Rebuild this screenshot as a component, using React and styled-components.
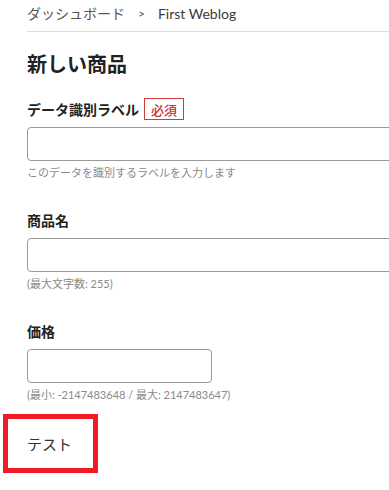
import React from "react";
import styled, { createGlobalStyle } from "styled-components";

const GlobalStyle = createGlobalStyle`
  body {
    margin: 0;
    background: #fff;
    font-family: "Lato", "Noto Sans CJK JP", sans-serif;
    color: #222;
  }
`;

const Page = styled.div`
  width: 389px;
  height: 490px;
  overflow: hidden;
`;

const Content = styled.div`
  padding-left: 27px;
`;

const Breadcrumb = styled.nav`
  display: flex;
  align-items: center;
  gap: 13px;
  padding: 4px 0 7px;
  font-size: 14px;
  line-height: 20px;
  color: #444;
  border-bottom: 1px solid #ddd;
`;

const Crumb = styled.span`
  color: ${({ current }) => (current ? "#3a3a3a" : "#555")};
`;

const Separator = styled.span`
  font-size: 12px;
  color: #555;
`;

const Heading = styled.h1`
  margin: 18px 0 0;
  font-size: 20px;
  line-height: 28px;
  font-weight: 700;
  color: #222;
`;

const Field = styled.div`
  margin-top: ${({ first }) => (first ? "20px" : "28px")};
`;

const LabelRow = styled.div`
  display: flex;
  align-items: center;
  gap: 5px;
  height: 22px;
`;

const Label = styled.label`
  font-size: 14px;
  font-weight: 700;
  color: #222;
`;

const Required = styled.span`
  display: inline-flex;
  align-items: center;
  justify-content: center;
  height: 20px;
  padding: 0 6px;
  border: 1px solid #d03c3c;
  color: #d0302f;
  font-size: 13px;
  font-weight: 500;
`;

const Input = styled.input`
  display: block;
  box-sizing: border-box;
  margin-top: 7px;
  width: ${({ narrow }) => (narrow ? "185px" : "380px")};
  height: 34px;
  border: 1px solid #9a9a9a;
  border-radius: 4px;
  background: #fff;
`;

const Help = styled.div`
  margin-top: 4px;
  font-size: 11px;
  line-height: 16px;
  color: #8a8a8a;
`;

const TestBox = styled.div`
  margin: 11px 0 0 3px;
  width: 95px;
  height: 59px;
  box-sizing: border-box;
  border: 5px solid #ee1c25;
  display: flex;
  align-items: center;
  padding-left: 19px;
  font-size: 15px;
  color: #333;
`;

export default function App() {
  return (
    <Page>
      <GlobalStyle />
      <Content>
        <Breadcrumb>
          <Crumb>ダッシュボード</Crumb>
          <Separator>&gt;</Separator>
          <Crumb current>First Weblog</Crumb>
        </Breadcrumb>
        <Heading>新しい商品</Heading>
        <Field first>
          <LabelRow>
            <Label>データ識別ラベル</Label>
            <Required>必須</Required>
          </LabelRow>
          <Input />
          <Help>このデータを識別するラベルを入力します</Help>
        </Field>
        <Field>
          <LabelRow>
            <Label>商品名</Label>
          </LabelRow>
          <Input />
          <Help>(最大文字数: 255)</Help>
        </Field>
        <Field>
          <LabelRow>
            <Label>価格</Label>
          </LabelRow>
          <Input narrow />
          <Help>(最小: -2147483648 / 最大: 2147483647)</Help>
        </Field>
      </Content>
      <TestBox>テスト</TestBox>
    </Page>
  );
}
